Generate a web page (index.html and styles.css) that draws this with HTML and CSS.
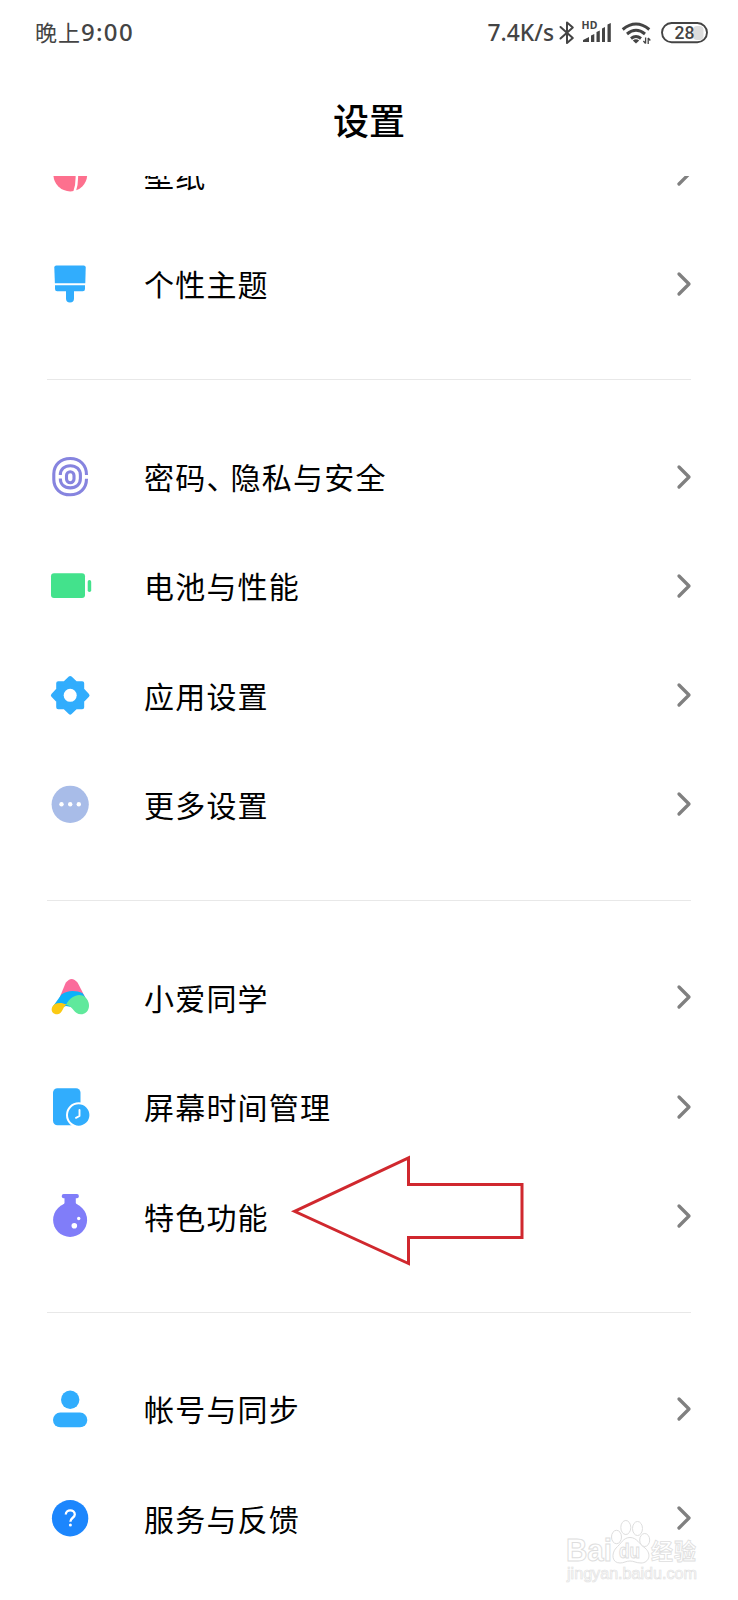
FILE: index.html
```html
<!DOCTYPE html>
<html lang="zh-CN">
<head>
<meta charset="utf-8">
<title>设置</title>
<link rel="stylesheet" href="styles.css">
</head>
<body>
<div class="screen">
  <header class="status">
    <div class="clock">晚上<span class="digits">9:00</span></div>
    <div class="indicators">
      <span class="speed">7.4K/s</span>
      <svg class="status-icons" width="154" height="32" viewBox="556 17 154 32">
        <path d="M560.500 27 L572.800 38 L567 43 V22.500 L572.800 27.500 L560.500 38.500" fill="none" stroke="#444" stroke-width="2" stroke-linejoin="round" stroke-linecap="round"/>
        <text class="hd" x="581.500" y="29" textLength="16">HD</text>
        <path d="M583 42 V40 L589 37 V42Z M591 35.500 L594.300 34 V42 H591Z M596.500 32 L599.800 30.500 V42 H596.500Z M602 28.500 L605 27 V42 H602Z M607.500 24.500 L610.800 23 V42 H607.500Z" fill="#444"/>
        <g fill="none" stroke="#444" stroke-width="3"><path d="M622.700 29.500 Q636 18.500 649.300 29.500"/><path d="M627 34 Q636 26.500 645 34"/><path d="M631 38.500 Q636 34.500 641 38.500"/></g>
        <path d="M632.800 40.500 Q636 38 639.200 40.500 L636 43.500Z" fill="#444"/>
        <path d="M645.600 37.500 V43.500 M643.400 41 L645.600 43.500 M648.200 44 V38 M648.200 38 L650.300 40.500" fill="none" stroke="#444" stroke-width="1.300"/>
        <rect x="693" y="26" width="10.500" height="14" rx="4" fill="#ddd"/>
        <rect x="662" y="23" width="45" height="19.200" rx="9.600" fill="none" stroke="#444" stroke-width="1.900"/>
        <text class="charge" x="684.500" y="38.700" text-anchor="middle">28</text>
      </svg>
    </div>
  </header>
  <h1 class="title">设置</h1>

  <main class="list">
    <div class="row first">
      <svg class="icon" viewBox="0 0 48 48"><circle cx="24.300" cy="24.500" r="16.900" fill="#fd708e"/><path d="M28 8 Q33.500 28 28.500 42" fill="none" stroke="#fff" stroke-width="2.500"/></svg>
      <span class="label">壁纸</span><svg class="chevron" viewBox="0 0 16 26"><path d="M3 3 L13 13 L3 23"/></svg>
    </div>
    <div class="row">
      <svg class="icon" viewBox="0 0 48 48" fill="#31adfd"><path d="M10.300 5.500 H37.700 Q39.700 5.500 39.700 7.500 L39.300 23.200 H8.900 L8.300 7.500 Q8.300 5.500 10.300 5.500Z"/><path d="M9 25.200 H39 V29 Q39 31.200 36.800 31.200 H28 V38.500 A4 4 0 0 1 20 38.500 V31.200 H11.200 Q9 31.200 9 29Z"/></svg>
      <span class="label">个性主题</span><svg class="chevron" viewBox="0 0 16 26"><path d="M3 3 L13 13 L3 23"/></svg>
    </div>
    <div class="divider"></div>
    <div class="row">
      <svg class="icon" viewBox="0 0 48 48" fill="none" stroke="#8684df" stroke-width="3.100"><path d="M40.500 22 C40.500 12 34 5.500 24.200 5.500 S7.800 12 7.800 21 V26.500 C7.800 35.500 14.400 41.800 24.200 41.800 C34 41.800 40.500 35.500 40.500 25.800"/><path d="M14.300 22 C14.300 16.300 18.500 12.700 24.300 12.700 S34.400 16.300 34.400 22 V25.500 C34.400 31.200 30.300 34.900 24.300 34.900 S14.300 31.200 14.300 25.500"/><rect x="20.500" y="18.700" width="7.500" height="11" rx="3.700"/></svg>
      <span class="label">密码<span class="comma">、</span>隐私与安全</span><svg class="chevron" viewBox="0 0 16 26"><path d="M3 3 L13 13 L3 23"/></svg>
    </div>
    <div class="row">
      <svg class="icon" viewBox="0 0 48 48" fill="#43e28c"><rect x="5" y="11.300" width="34" height="24.700" rx="3"/><rect x="41.700" y="18" width="3.500" height="12" rx="1.700"/></svg>
      <span class="label">电池与性能</span><svg class="chevron" viewBox="0 0 16 26"><path d="M3 3 L13 13 L3 23"/></svg>
    </div>
    <div class="row">
      <svg class="icon" viewBox="0 0 48 48"><path d="M24.200 7 L29.700 12.300 L36.200 12.300 L36.200 18.700 L41.500 24.300 L36.200 29.800 L36.200 36.300 L29.700 36.300 L24.200 41.600 L18.700 36.300 L12.200 36.300 L12.200 29.800 L6.900 24.300 L12.200 18.700 L12.200 12.300 L18.700 12.300Z" fill="#31adfd" stroke="#31adfd" stroke-width="4" stroke-linejoin="round"/><circle cx="24.200" cy="24.300" r="6.500" fill="#fff"/></svg>
      <span class="label">应用设置</span><svg class="chevron" viewBox="0 0 16 26"><path d="M3 3 L13 13 L3 23"/></svg>
    </div>
    <div class="row">
      <svg class="icon" viewBox="0 0 48 48"><circle cx="24.200" cy="24.300" r="18.600" fill="#a8bce8"/><g fill="#fff"><circle cx="15.500" cy="24.300" r="2.200"/><circle cx="24.200" cy="24.300" r="2.200"/><circle cx="32.800" cy="24.300" r="2.200"/></g></svg>
      <span class="label">更多设置</span><svg class="chevron" viewBox="0 0 16 26"><path d="M3 3 L13 13 L3 23"/></svg>
    </div>
    <div class="divider"></div>
    <div class="row">
      <svg class="icon" viewBox="0 0 48 48"><path d="M13 26 L19.700 9.800 Q25.600 2 31.700 9.800 L39 24Z" fill="#fb6c9c"/><path d="M6.500 34 L15.500 21.500 C21 17 30 16.800 36.700 20.300 L42 29 L36 36 L20 33 L9 37Z" fill="#0cb1fb"/><path d="M20 31.700 C25 22.500 34 19.500 39.500 24.500 C46 31 43 41.300 35 41.300 C28 41.300 27 33 20 31.700Z" fill="#60e99c"/><path d="M20.500 31.600 C15 29 8 29.500 6 34.500 C4.500 39 8 41.600 11.500 41.300 C17 40.500 16 34.500 20.500 31.600Z" fill="#fbca13"/></svg>
      <span class="label">小爱同学</span><svg class="chevron" viewBox="0 0 16 26"><path d="M3 3 L13 13 L3 23"/></svg>
    </div>
    <div class="row">
      <svg class="icon" viewBox="0 0 48 48"><rect x="7" y="5.300" width="27.500" height="37" rx="4.500" fill="#31adfd"/><circle cx="32.700" cy="32" r="11.700" fill="#31adfd" stroke="#fff" stroke-width="2"/><path d="M33.500 27 V33 L30 34.800" fill="none" stroke="#fff" stroke-width="1.900" stroke-linecap="round" stroke-linejoin="round"/></svg>
      <span class="label">屏幕时间管理</span><svg class="chevron" viewBox="0 0 16 26"><path d="M3 3 L13 13 L3 23"/></svg>
    </div>
    <div class="row">
      <svg class="icon" viewBox="0 0 48 48"><g fill="#807df9"><circle cx="24.100" cy="27.900" r="17"/><rect x="15.800" y="2" width="17" height="4.200" rx="1.800"/><path d="M18.500 5 H29.800 V11 Q30 12 33 13.500 H15.500 Q18.500 12 18.500 11Z"/></g><g fill="#fff"><circle cx="28.300" cy="33.700" r="2.800"/><circle cx="32.700" cy="26.500" r="1.700"/></g></svg>
      <span class="label">特色功能</span><svg class="chevron" viewBox="0 0 16 26"><path d="M3 3 L13 13 L3 23"/></svg>
    </div>
    <div class="divider"></div>
    <div class="row">
      <svg class="icon" viewBox="0 0 48 48" fill="#31adfd"><circle cx="24.200" cy="14.700" r="9.200"/><rect x="7" y="27.600" width="34.300" height="14.700" rx="7.300"/></svg>
      <span class="label">帐号与同步</span><svg class="chevron" viewBox="0 0 16 26"><path d="M3 3 L13 13 L3 23"/></svg>
    </div>
    <div class="row">
      <svg class="icon" viewBox="0 0 48 48"><circle cx="24.100" cy="24.200" r="18.200" fill="#1c86fd"/><path d="M19.800 20.500 C19.800 15 28.800 15 28.800 20.500 C28.800 23.800 24.400 23.800 24.400 27.800" fill="none" stroke="#fff" stroke-width="2.300"/><circle cx="24.400" cy="31" r="1.500" fill="#fff"/></svg>
      <span class="label">服务与反馈</span><svg class="chevron" viewBox="0 0 16 26"><path d="M3 3 L13 13 L3 23"/></svg>
    </div>
  </main>

  <svg class="arrow" width="240" height="120" viewBox="290 1150 240 120"><path d="M294.500 1211.300 L408.500 1157.800 V1184.400 H522 V1237.500 H408.500 V1263.500Z"/></svg>

  <svg class="watermark" width="150" height="75" viewBox="560 1515 150 75">
    <text x="566" y="1561" class="brand" textLength="46" lengthAdjust="spacingAndGlyphs">Bai</text>
    <path d="M630 1537.500 C637 1537.500 639 1544 645 1548 C652 1554 649 1563 641 1563 C636 1563 634 1561 630 1561 C626 1561 624 1563 620 1563 C612 1563 611 1554 616 1548 C621 1544 623 1537.500 630 1537.500Z"/>
    <ellipse cx="616.500" cy="1537" rx="5" ry="6.700"/><ellipse cx="625.800" cy="1527.500" rx="5" ry="7"/><ellipse cx="637.500" cy="1528.500" rx="5" ry="7"/><ellipse cx="644.700" cy="1540" rx="5" ry="6.500"/>
    <text x="619" y="1558" class="du" textLength="21" lengthAdjust="spacingAndGlyphs">du</text>
    <text x="651" y="1559" class="zh" textLength="45">经验</text>
    <text x="567" y="1579" class="url" textLength="130" lengthAdjust="spacingAndGlyphs">jingyan.baidu.com</text>
  </svg>
</div>
</body>
</html>
```

FILE: styles.css
```css
* { box-sizing: border-box; }
body { margin: 0; background: #fff; }
.screen {
  position: relative;
  display: flex;
  flex-direction: column;
  width: 738px;
  height: 1600px;
  overflow: hidden;
  background: #fff;
  color: #000;
  font-family: "Noto Sans CJK SC", sans-serif;
}
.status {
  display: flex;
  justify-content: space-between;
  align-items: center;
  height: 66px;
  padding: 0 28px 0 35px;
  color: #444;
}
.clock {
  padding-bottom: 3px;
  font-size: 22px;
  line-height: 32px;
  letter-spacing: 1px;
}
.digits { font: 500 24px/32px "Noto Sans", sans-serif; letter-spacing: 1.3px; }
.indicators { display: flex; align-items: center; gap: 2px; }
.speed { font: 500 22.8px/32px "Noto Sans", sans-serif; }
.status-icons { display: block; }
.hd { font: 700 10.5px "Noto Sans", sans-serif; fill: #444; }
.charge { font: 500 17.5px Roboto, sans-serif; fill: #444; }
.title {
  margin: 0;
  height: 110px;
  padding-top: 27px;
  font-size: 36px;
  font-weight: 500;
  line-height: 53px;
  text-align: center;
}
.list { flex: 1; overflow: hidden; }
.row {
  display: flex;
  align-items: center;
  height: 109.3px;
  padding: 0 45px 0 46px;
}
.first { margin-top: -56.4px; }
.icon { flex: none; width: 48px; height: 48px; }
.label {
  flex: 1;
  margin-left: 50px;
  padding-bottom: 1px;
  font-size: 30px;
  line-height: 44px;
  letter-spacing: 1.2px;
}
.comma { display: inline-block; width: 24.2px; }
.chevron { flex: none; width: 16px; height: 26px; margin-right: 1.5px; }
.chevron path {
  fill: none;
  stroke: #808080;
  stroke-width: 3.3;
  stroke-linecap: round;
  stroke-linejoin: round;
}
.divider { height: 83.7px; padding: 41px 47px 0 47px; }
.divider::before { content: ""; display: block; height: 1px; background: #e8e8e8; }
.arrow { position: absolute; left: 290px; top: 1150px; }
.arrow path { fill: none; stroke: #d0282e; stroke-width: 3; }
.watermark {
  position: absolute;
  left: 560px;
  top: 1515px;
  fill: #fff;
  stroke: #dedede;
  stroke-width: 1;
}
.brand { font: 700 31px "Liberation Sans", sans-serif; }
.du { font: 700 20px "Liberation Sans", sans-serif; }
.zh { font: 700 22px "Noto Sans CJK SC", sans-serif; stroke-width: 0.8; }
.url { font: 400 16px "Liberation Sans", sans-serif; stroke: #e2e2e2; stroke-width: 0.7; }
```
